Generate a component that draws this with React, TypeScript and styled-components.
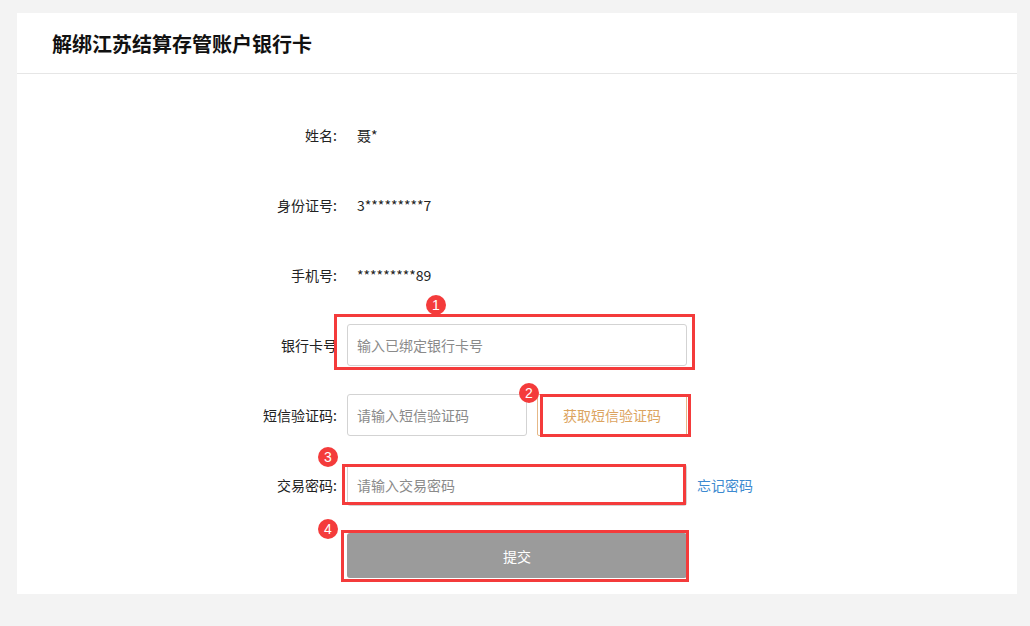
import * as React from 'react';
import styled, { createGlobalStyle } from 'styled-components';

const GlobalStyle = createGlobalStyle`
  html, body {
    margin: 0;
    padding: 0;
    background: #f3f3f3;
    font-family: "Microsoft YaHei", "Noto Sans CJK SC", "Noto Sans", sans-serif;
    color: #333;
  }
  * { box-sizing: border-box; }
`;

interface MarkProps {
  n: number;
  box: { l: number; t: number; r: number; b: number };
  badge: { l: number; t: number };
}

function Mark({ n, box, badge }: MarkProps): React.ReactElement {
  return (
    <>
      <Outline style={{ left: box.l, top: box.t, right: box.r, bottom: box.b }} />
      <Badge style={{ left: badge.l, top: badge.t }}>{n}</Badge>
    </>
  );
}

export default function App(): React.ReactElement {
  return (
    <Page>
      <GlobalStyle />
      <Card>
        <Header>
          <Title>解绑江苏结算存管账户银行卡</Title>
        </Header>
        <Form>
          <Row>
            <Label>姓名:</Label>
            <Value>聂*</Value>
          </Row>
          <Row>
            <Label>身份证号:</Label>
            <Value>3*********7</Value>
          </Row>
          <Row>
            <Label>手机号:</Label>
            <Value>*********89</Value>
          </Row>
          <Row>
            <Label>银行卡号</Label>
            <Field $width={340}>
              <Input placeholder="输入已绑定银行卡号" />
              <Mark n={1} box={{ l: -13, t: -10, r: -8, b: -4 }} badge={{ l: 79, t: -29 }} />
            </Field>
          </Row>
          <Row>
            <Label>短信验证码:</Label>
            <Field $width={180}>
              <Input placeholder="请输入短信验证码" />
            </Field>
            <Field $width={150}>
              <CodeButton type="button">获取短信验证码</CodeButton>
              <Mark n={2} box={{ l: 3, t: 0, r: -4, b: -1 }} badge={{ l: -18, t: -11 }} />
            </Field>
          </Row>
          <Row>
            <Label>交易密码:</Label>
            <Field $width={340}>
              <Input type="password" placeholder="请输入交易密码" />
              <Mark n={3} box={{ l: -5, t: 0, r: 1, b: 1 }} badge={{ l: -29, t: -17 }} />
            </Field>
            <Link href="#">忘记密码</Link>
          </Row>
          <Row>
            <Label />
            <Field $width={340}>
              <Submit type="button">提交</Submit>
              <Mark n={4} box={{ l: -6, t: -3, r: -2, b: -4 }} badge={{ l: -29, t: -14 }} />
            </Field>
          </Row>
        </Form>
      </Card>
    </Page>
  );
}

const Page = styled.div`
  padding: 13px 13px 32px 17px;
  min-height: 626px;
`;

const Card = styled.div`
  width: 1000px;
  height: 581px;
  background: #fff;
`;

const Header = styled.div`
  height: 61px;
  border-bottom: 1px solid #e6e6e6;
  padding: 0 35px;
  display: flex;
  align-items: center;
`;

const Title = styled.h1`
  margin: 0;
  font-size: 20px;
  font-weight: bold;
  color: #111;
`;

const Form = styled.div`
  padding: 40px 0 0 220px;
  display: flex;
  flex-direction: column;
  gap: 28px;
`;

const Row = styled.div`
  display: flex;
  align-items: center;
  height: 42px;
  gap: 10px;

  &:last-child {
    height: 45px;
    margin-top: -1px;
  }
`;

const Label = styled.div`
  width: 100px;
  text-align: right;
  color: #222;
  font-size: 14px;
`;

const Value = styled.div`
  padding-left: 10px;
  color: #222;
  font-size: 14px;
`;

const Field = styled.div<{ $width: number }>`
  position: relative;
  width: ${(p) => p.$width}px;
  height: 100%;
`;

const Input = styled.input`
  width: 100%;
  height: 100%;
  border: 1px solid #d3d3d3;
  border-radius: 3px;
  padding: 0 9px;
  font-family: inherit;
  font-size: 14px;
  color: #333;
  outline: none;
  background: #fff;

  &::placeholder {
    color: #8a8a8a;
  }
`;

const CodeButton = styled.button`
  width: 100%;
  height: 100%;
  border: 1px solid #e6b887;
  border-radius: 2px;
  background: #fff;
  color: #dca45f;
  font-family: inherit;
  font-size: 14px;
  cursor: pointer;
`;

const Link = styled.a`
  color: #3d8ad0;
  font-size: 14px;
  text-decoration: none;
`;

const Submit = styled.button`
  width: 100%;
  height: 100%;
  border: none;
  border-radius: 3px;
  background: #9b9b9b;
  color: #fff;
  font-family: inherit;
  font-size: 14px;
  cursor: pointer;
`;

const Outline = styled.div`
  position: absolute;
  border: 3px solid #f43b3b;
  pointer-events: none;
`;

const Badge = styled.div`
  position: absolute;
  width: 20px;
  height: 20px;
  border-radius: 50%;
  background: #f43b3b;
  color: #fff;
  font-family: "Liberation Sans", Arial, sans-serif;
  font-size: 14px;
  display: flex;
  align-items: center;
  justify-content: center;
`;
